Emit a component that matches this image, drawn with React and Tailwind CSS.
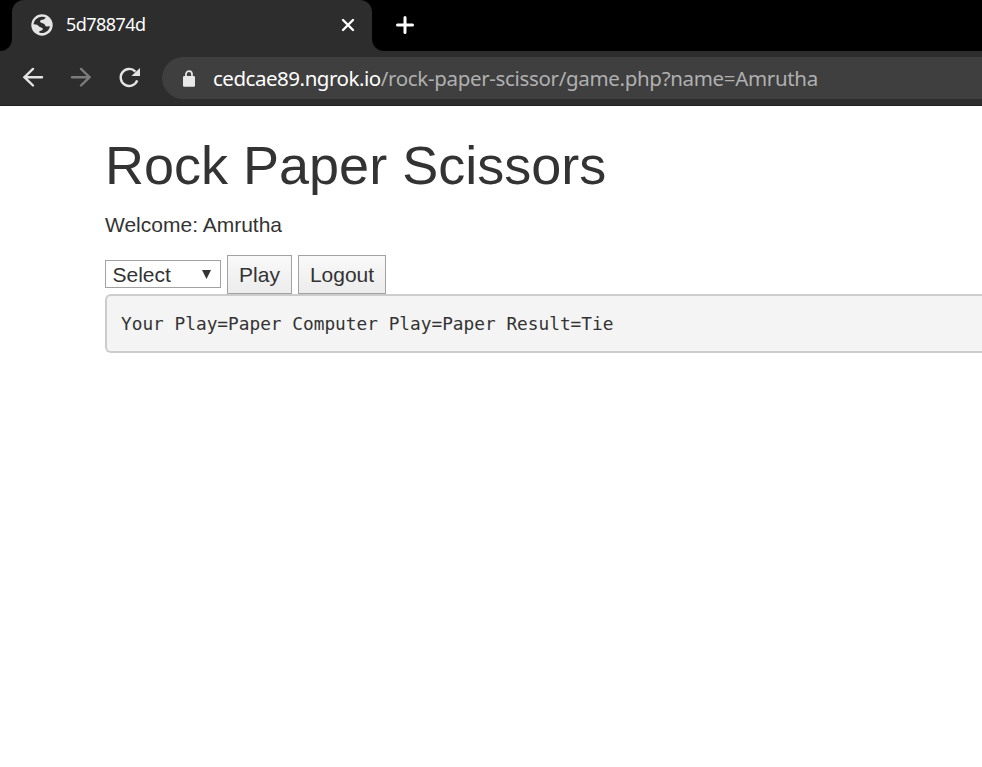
import React from "react";

function GlobeIcon() {
  return (
    <svg className="h-[22px] w-[22px] shrink-0" viewBox="0 0 22 22">
      <circle cx="11" cy="11" r="10.7" fill="#e4e4e4" />
      <path
        d="M2.6 10.2 C3 6.8 5.6 3.6 9.4 3 C11.6 2.6 13.6 2.8 14.6 3.3 C14.3 4.9 13.1 5.6 11.2 5.8 C9.6 6 8.8 6.7 9.2 8 C9.6 9.1 12.1 8.8 13.3 10.1 C14.2 11.3 13.9 12.4 15.4 12.4 L19 12.3 C18.2 16 15.4 19.2 10.4 19.1 L8.4 18.7 L8.4 17 C10.6 16.6 12 16.3 11.8 14.8 C11.6 13.4 8.9 13.8 7.8 12.3 C7 11 5.6 10.2 2.6 10.2 Z"
        fill="#2d2d2d"
      />
    </svg>
  );
}

function TabStrip() {
  return (
    <div className="flex h-[51px] bg-[#2d2d2d]">
      <div className="w-3 rounded-br-[12px] bg-black" />
      <div className="w-[360px] bg-black">
        <div className="flex h-full items-center rounded-t-[12px] bg-[#2d2d2d] pb-[2px] pl-[19px] pr-[17px]">
          <GlobeIcon />
          <span className="ml-[13px] flex-1 whitespace-nowrap pb-[2px] font-['Noto_Sans',sans-serif] text-[18px] leading-6 tracking-[-0.55px] text-white">
            5d78874d
          </span>
          <svg className="h-[14px] w-[14px]" viewBox="0 0 14 14" fill="none" stroke="#fff" strokeWidth="2.4" strokeLinecap="round">
            <path d="M2 2 12 12M12 2 2 12" />
          </svg>
        </div>
      </div>
      <div className="flex flex-1 items-center rounded-bl-[12px] bg-black pb-[2px] pl-[24px]">
        <svg className="h-[18px] w-[18px]" viewBox="0 0 18 18" fill="none" stroke="#fff" strokeWidth="3" strokeLinecap="round">
          <path d="M9 1.5V16.5M1.5 9H16.5" />
        </svg>
      </div>
    </div>
  );
}

function Toolbar() {
  return (
    <div className="flex h-[55px] items-center border-b border-[#202020] bg-[#2d2d2d] pl-[22px]">
      <svg className="h-[22px] w-[22px]" viewBox="0 0 22 22" fill="none" stroke="#e4e4e4" strokeWidth="2.4" strokeLinecap="round">
        <path d="M20 10.2H2.5M11 1.9 2.4 10.2 11 18.5" />
      </svg>
      <svg className="ml-[26px] h-[22px] w-[22px]" viewBox="0 0 22 22" fill="none" stroke="#7b7b7b" strokeWidth="2.4" strokeLinecap="round">
        <path d="M2 10.2H19.5M11 1.9 19.6 10.2 11 18.5" />
      </svg>
      <svg className="ml-[26px] h-[22px] w-[22px]" viewBox="0 0 22 22">
        <path d="M19.2 13.3A8.5 8.5 0 1 1 17.4 4.6" fill="none" stroke="#e4e4e4" strokeWidth="2.4" />
        <path d="M22 1V8.9H13.4Z" fill="#e4e4e4" />
      </svg>
      <div className="ml-[22px] flex h-[42px] flex-1 items-center rounded-l-full bg-[#3f3f3f] pl-[21px]">
        <svg className="h-[17px] w-3 shrink-0" viewBox="0 0 12 17">
          <path d="M3 7V4.2a3 3 0 0 1 6 0V7" fill="none" stroke="#e8e8e8" strokeWidth="1.7" />
          <rect x="0" y="6" width="12" height="10.7" rx="1.3" fill="#e8e8e8" />
        </svg>
        <div className="ml-[18px] whitespace-nowrap font-['Noto_Sans',sans-serif] text-[20.5px] leading-7 text-[#b0b0b0]">
          <span className="tracking-[-0.47px] text-white">cedcae89.ngrok.io</span>
          <span className="tracking-[-0.33px]">/rock-paper-scissor/game.php?name=Amrutha</span>
        </div>
      </div>
    </div>
  );
}

const BUTTON =
  "flex h-[39px] items-center justify-center border border-[#a2a2a2] bg-linear-to-b from-[#f9f9f9] to-[#ececec] text-[21px] leading-[30px] text-[#333]";

export default function App() {
  return (
    <div className="h-[767px] w-[982px] overflow-hidden bg-white font-['Liberation_Sans',Arial,sans-serif] text-[#333]">
      <TabStrip />
      <Toolbar />
      <main className="pl-[105px] pt-[30px]">
        <h1 className="text-[54px] font-normal leading-[59px]">Rock Paper Scissors</h1>
        <p className="mt-[15px] text-[21px] leading-[30px]">Welcome: Amrutha</p>
        <form className="mt-[15px] flex items-start" onSubmit={(e) => e.preventDefault()}>
          <button type="button" className="mt-[5px] flex h-7 w-[116px] items-center justify-between border border-[#a2a2a2] bg-white pl-[6.5px] pr-[9px] text-[21px] leading-[26px]">
            <span className="pt-[2px]">Select</span>
            <svg className="h-[9px] w-[9px]" viewBox="0 0 9 9">
              <path d="M0 0H9L4.5 9Z" fill="#333" />
            </svg>
          </button>
          <button type="submit" className={`${BUTTON} ml-[6px] w-[65px]`}>Play</button>
          <button type="button" className={`${BUTTON} ml-[6px] w-[88px]`}>Logout</button>
        </form>
        <pre className="h-[59px] rounded-l-[6px] border-2 border-r-0 border-[#ccc] bg-[#f4f4f4] pl-[14px] pt-[14px] font-['DejaVu_Sans_Mono',monospace] text-[17.8px] leading-[28px]">
          Your Play=Paper Computer Play=Paper Result=Tie
        </pre>
      </main>
    </div>
  );
}
